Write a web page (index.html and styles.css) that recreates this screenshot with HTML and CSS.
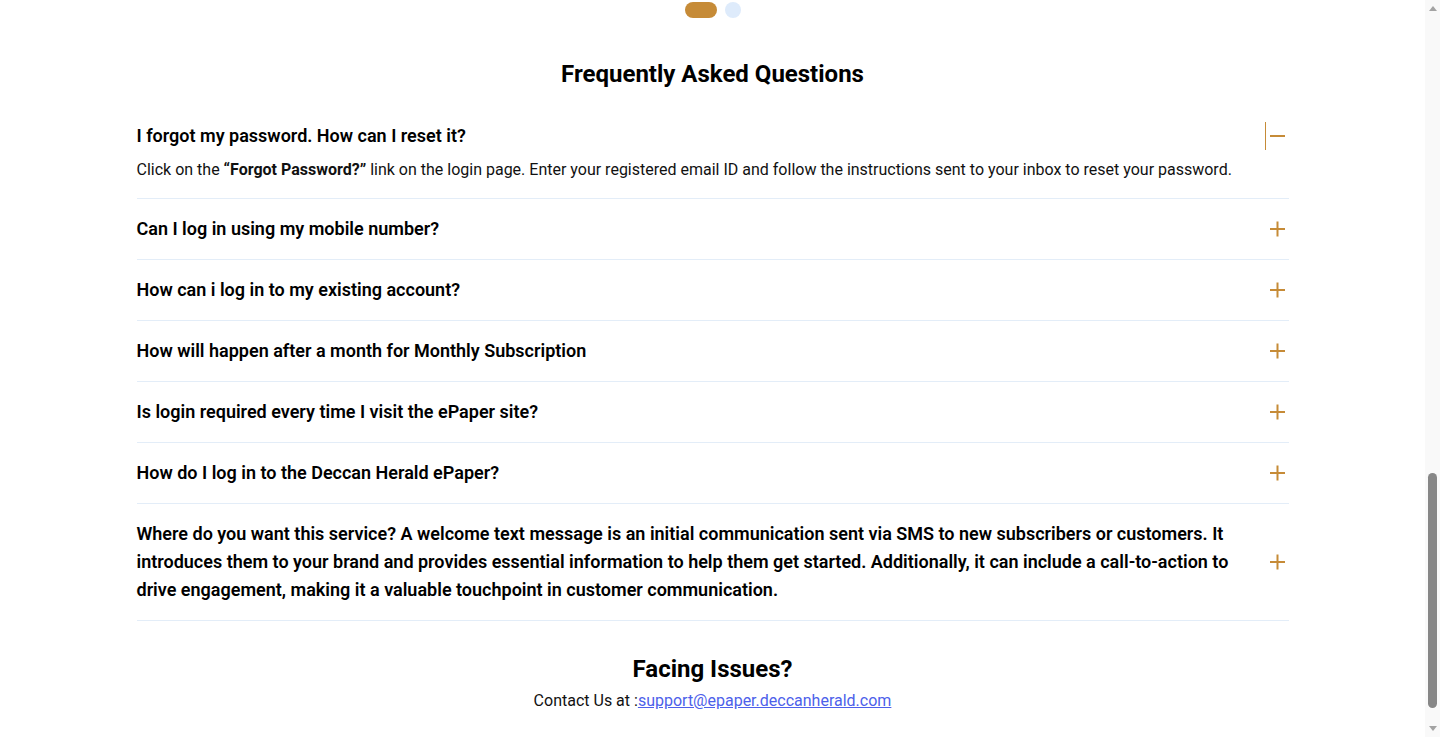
FILE: index.html
```html
<!DOCTYPE html>
<html lang="en">
<head>
<meta charset="utf-8">
<title>Deccan Herald ePaper – FAQ</title>
<link rel="stylesheet" href="styles.css">
</head>
<body>
<div class="viewport">
  <div class="page">
    <section class="plans">
      <div class="plans-track"></div>
      <div class="dots">
        <span class="dot dot-active"></span>
        <span class="dot"></span>
      </div>
    </section>

    <section class="faq">
      <h2 class="section-title">Frequently Asked Questions</h2>
      <div class="faq-list">
        <div class="faq-item open">
          <button class="faq-q">
            <span class="faq-q-text">I forgot my password. How can I reset it?</span>
            <span class="faq-icon faq-icon-open">
              <svg width="24" height="24" viewBox="0 0 24 24"><path d="M4 12h15" stroke="#c68b37" stroke-width="2" fill="none"/></svg>
            </span>
          </button>
          <p class="faq-a">Click on the <strong>“Forgot Password?”</strong> link on the login page. Enter your registered email ID and follow the instructions sent to your inbox to reset your password.</p>
        </div>
        <div class="faq-item">
          <button class="faq-q">
            <span class="faq-q-text">Can I log in using my mobile number?</span>
            <span class="faq-icon"><svg width="24" height="24" viewBox="0 0 24 24"><path d="M5 12h15M12.5 4.5v15" stroke="#c68b37" stroke-width="2" fill="none"/></svg></span>
          </button>
        </div>
        <div class="faq-item">
          <button class="faq-q">
            <span class="faq-q-text">How can i log in to my existing account?</span>
            <span class="faq-icon"><svg width="24" height="24" viewBox="0 0 24 24"><path d="M5 12h15M12.5 4.5v15" stroke="#c68b37" stroke-width="2" fill="none"/></svg></span>
          </button>
        </div>
        <div class="faq-item">
          <button class="faq-q">
            <span class="faq-q-text">How will happen after a month for Monthly Subscription</span>
            <span class="faq-icon"><svg width="24" height="24" viewBox="0 0 24 24"><path d="M5 12h15M12.5 4.5v15" stroke="#c68b37" stroke-width="2" fill="none"/></svg></span>
          </button>
        </div>
        <div class="faq-item">
          <button class="faq-q">
            <span class="faq-q-text">Is login required every time I visit the ePaper site?</span>
            <span class="faq-icon"><svg width="24" height="24" viewBox="0 0 24 24"><path d="M5 12h15M12.5 4.5v15" stroke="#c68b37" stroke-width="2" fill="none"/></svg></span>
          </button>
        </div>
        <div class="faq-item">
          <button class="faq-q">
            <span class="faq-q-text">How do I log in to the Deccan Herald ePaper?</span>
            <span class="faq-icon"><svg width="24" height="24" viewBox="0 0 24 24"><path d="M5 12h15M12.5 4.5v15" stroke="#c68b37" stroke-width="2" fill="none"/></svg></span>
          </button>
        </div>
        <div class="faq-item">
          <button class="faq-q">
            <span class="faq-q-text">Where do you want this service? A welcome text message is an initial communication sent via SMS to new subscribers or customers. It introduces them to your brand and provides essential information to help them get started. Additionally, it can include a call-to-action to drive engagement, making it a valuable touchpoint in customer communication.</span>
            <span class="faq-icon"><svg width="24" height="24" viewBox="0 0 24 24"><path d="M5 12h15M12.5 4.5v15" stroke="#c68b37" stroke-width="2" fill="none"/></svg></span>
          </button>
        </div>
      </div>
    </section>

    <section class="support">
      <h2 class="section-title">Facing Issues?</h2>
      <p class="support-text">Contact Us at :<a class="support-link" href="mailto:support@epaper.deccanherald.com">support@epaper.deccanherald.com</a></p>
    </section>
  </div>
</div>
<div class="scrollbar" aria-hidden="true">
  <div class="sb-arrow"><span class="sb-tri sb-tri-up"></span></div>
  <div class="sb-track"><div class="sb-thumb"></div></div>
  <div class="sb-arrow"><span class="sb-tri sb-tri-down"></span></div>
</div>
</body>
</html>
```

FILE: styles.css
```css
* {
  box-sizing: border-box;
}

html, body {
  margin: 0;
  padding: 0;
  height: 100%;
  background: #ffffff;
  font-family: Roboto, "Liberation Sans", Arial, sans-serif;
  color: #000000;
}

body {
  display: flex;
  height: 100vh;
  overflow: hidden;
}

.viewport {
  flex: 1;
  min-width: 0;
  height: 100vh;
  overflow: hidden;
  display: flex;
  flex-direction: column-reverse;
}

.page {
  flex-shrink: 0;
  width: 100%;
}

.plans {
  display: flex;
  flex-direction: column;
  align-items: center;
}

.plans-track {
  height: 1492px;
  width: 100%;
  max-width: 1152px;
}

.dots {
  display: flex;
  gap: 8px;
  height: 16px;
}

.dot {
  width: 16px;
  height: 16px;
  border-radius: 8px;
  background: #deebfb;
}

.dot-active {
  width: 32px;
  background: #c68b37;
}

.faq {
  max-width: 1152px;
  margin: 0 auto;
  padding-top: 40px;
}

.section-title {
  margin: 0;
  font-size: 24px;
  line-height: 32px;
  font-weight: 700;
  text-align: center;
  color: #000;
}

.faq .section-title {
  margin-bottom: 16px;
}

.faq-item {
  border-bottom: 1px solid #e3edf8;
}

.faq-q {
  display: flex;
  align-items: center;
  justify-content: space-between;
  gap: 24px;
  width: 100%;
  padding: 16px 0;
  border: 0;
  background: transparent;
  font-family: inherit;
  text-align: left;
  cursor: pointer;
  color: #000;
}

.faq-item.open .faq-q {
  padding-bottom: 8px;
}

.faq-q-text {
  flex: 1;
  font-size: 18px;
  line-height: 28px;
  font-weight: 600;
}

.faq-icon {
  flex-shrink: 0;
  width: 24px;
  height: 24px;
  display: flex;
}

.faq-icon-open {
  height: 28px;
  align-items: center;
  border-left: 1px solid #c68b37;
}

.faq-icon-open svg {
  flex-shrink: 0;
}

.faq-a {
  margin: 0;
  padding-bottom: 16px;
  font-size: 16px;
  line-height: 24px;
  color: #111;
}

.faq-a strong {
  font-weight: 700;
}

.support {
  padding: 32px 0 24px;
  text-align: center;
}

.support .section-title {
  margin-bottom: 4px;
}

.support-text {
  margin: 0;
  font-size: 16px;
  line-height: 24px;
  color: #111;
}

.support-link {
  color: #4d5fea;
  text-decoration: underline;
}

/* scrollbar column */
.scrollbar {
  flex: 0 0 15px;
  width: 15px;
  height: 100vh;
  background: #f9f9f9;
  display: flex;
  flex-direction: column;
}

.sb-arrow {
  height: 15px;
  display: flex;
  align-items: center;
  justify-content: center;
}

.sb-tri {
  width: 0;
  height: 0;
  border-left: 4.5px solid transparent;
  border-right: 4.5px solid transparent;
}

.sb-tri-up {
  border-bottom: 5px solid #a3a3a3;
  margin-top: 2px;
}

.sb-tri-down {
  border-top: 5px solid #a3a3a3;
  margin-bottom: 2px;
}

.sb-track {
  flex: 1;
  display: flex;
  flex-direction: column;
  justify-content: flex-end;
  align-items: center;
  padding-bottom: 14px;
}

.sb-thumb {
  width: 9px;
  height: 235px;
  border-radius: 4.5px;
  background: #878787;
}
```
